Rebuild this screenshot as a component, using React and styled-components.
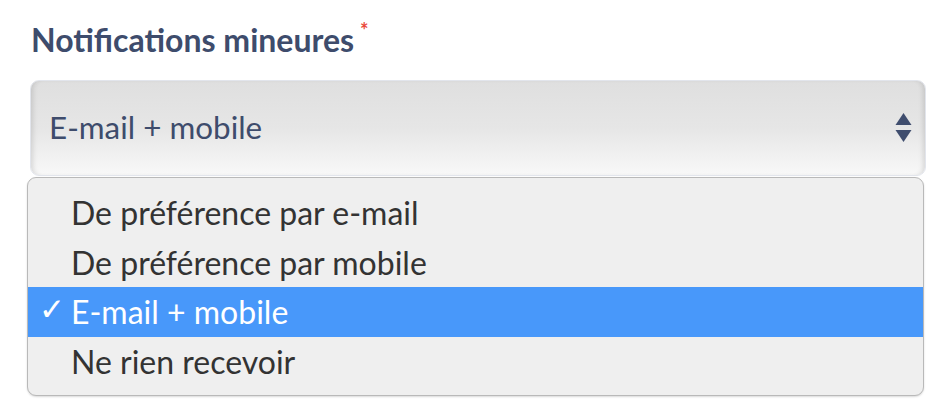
import React from "react";
import styled, { createGlobalStyle } from "styled-components";

const GlobalStyle = createGlobalStyle`
  body {
    margin: 0;
    background: #ffffff;
    font-family: Lato, "Noto Sans", sans-serif;
  }
`;

const Field = styled.div`
  width: 942px;
  height: 400px;
  padding: 20px 16px 0 30px;
  box-sizing: border-box;
  position: relative;
`;

const Label = styled.div`
  display: flex;
  align-items: flex-start;
  gap: 6px;
  margin: 0 0 0 1px;
  height: 60px;
  font-size: 32px;
  font-weight: 700;
  color: #3e4c6c;
  line-height: 40px;
`;

const Required = styled.span`
  color: #ea4a3c;
  font-size: 20px;
  line-height: 20px;
  margin-top: 0;
`;

const SelectBox = styled.div`
  position: relative;
  height: 96px;
  border: 1px solid #e2e5ec;
  border-radius: 9px;
  box-sizing: border-box;
  background: linear-gradient(#dfdfdf, #e6e6e6 50%, #f8f8f8);
  box-shadow: inset 5px 0 5px -3px rgba(0, 0, 0, 0.12),
    inset -5px 0 5px -3px rgba(0, 0, 0, 0.12);
  display: flex;
  align-items: center;
  padding: 0 13px 0 18px;
  font-size: 31.4px;
  color: #3e4c6c;
`;

const Value = styled.span`
  flex: 1;
  margin-top: -2px;
`;

const Arrows = styled.svg`
  width: 17px;
  height: 30px;
`;

const Menu = styled.ul`
  position: absolute;
  left: 27px;
  top: 177px;
  width: 897px;
  box-sizing: border-box;
  margin: 0;
  padding: 10px 0 9px;
  list-style: none;
  background: #efefef;
  border: 1px solid #b9b9b9;
  border-radius: 9px;
  box-shadow: 0 1px 2px rgba(0, 0, 0, 0.15);
`;

const Option = styled.li`
  position: relative;
  height: 49.5px;
  display: flex;
  align-items: center;
  padding-left: 43px;
  font-size: 32px;
  color: ${(p) => (p.$selected ? "#ffffff" : "#333333")};
  background: ${(p) => (p.$selected ? "#4898fa" : "transparent")};
`;

const Check = styled.span`
  position: absolute;
  left: 11px;
  top: 50%;
  transform: translateY(-58%);
  font-family: "DejaVu Sans", sans-serif;
  font-weight: 700;
  font-size: 31px;
`;

const options = [
  "De préférence par e-mail",
  "De préférence par mobile",
  "E-mail + mobile",
  "Ne rien recevoir",
];

export default function App() {
  const selected = "E-mail + mobile";
  return (
    <>
      <GlobalStyle />
      <Field>
        <Label>
          Notifications mineures
          <Required>*</Required>
        </Label>
        <SelectBox>
          <Value>{selected}</Value>
          <Arrows viewBox="0 0 17 30">
            <path d="M0.5 12 L8.5 0 L16.5 12 Z" fill="#3f4d6e" />
            <path d="M0.5 17 L16.5 17 L8.5 29 Z" fill="#3f4d6e" />
          </Arrows>
        </SelectBox>
        <Menu>
          {options.map((o) => (
            <Option key={o} $selected={o === selected}>
              {o === selected && <Check>✓</Check>}
              {o}
            </Option>
          ))}
        </Menu>
      </Field>
    </>
  );
}
